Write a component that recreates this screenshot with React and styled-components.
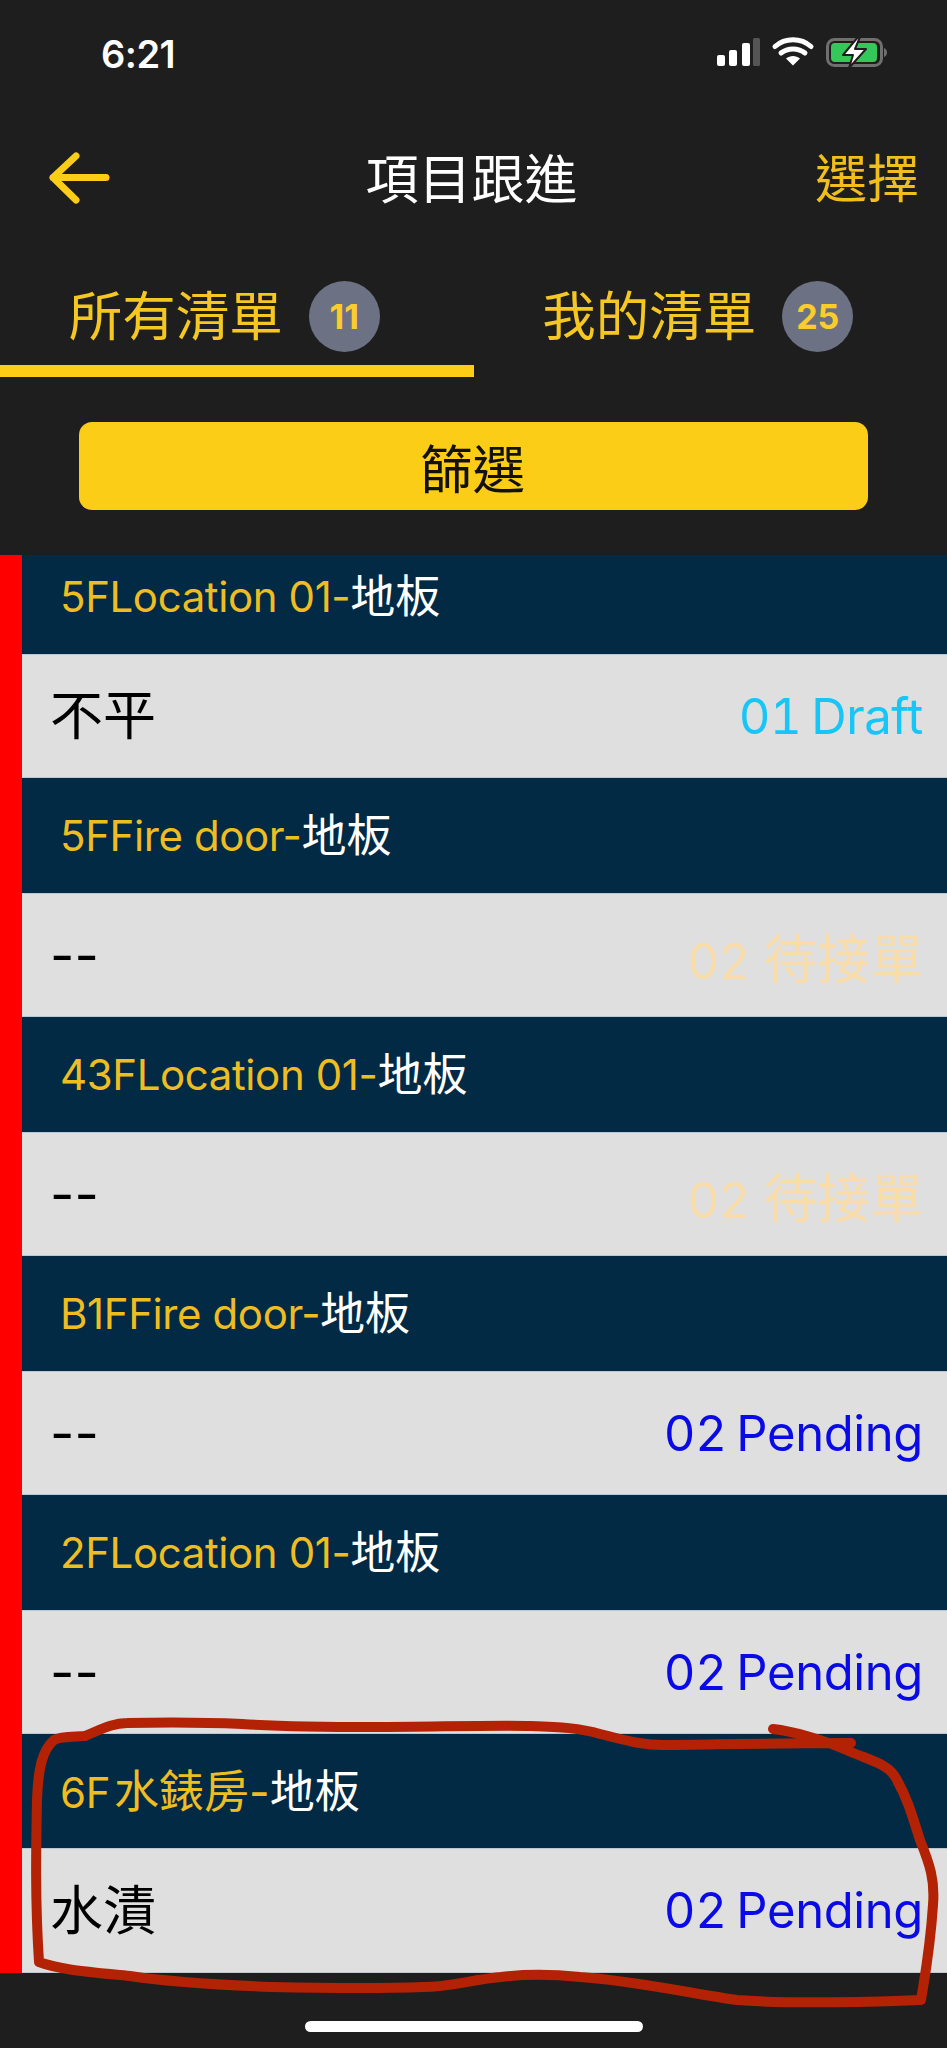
import React from "react";
import styled, { createGlobalStyle } from "styled-components";

const FONT = `Inter, "Noto Sans CJK TC", sans-serif`;

const GlobalStyle = createGlobalStyle`
  html, body {
    margin: 0;
    padding: 0;
    background: #1e1e1e;
  }
  * {
    box-sizing: border-box;
  }
`;

const Screen = styled.div`
  position: relative;
  width: 947px;
  height: 2048px;
  overflow: hidden;
  display: flex;
  flex-direction: column;
  background: #1e1e1e;
  font-family: ${FONT};
`;

const StatusBar = styled.div`
  height: 108px;
  padding: 36px 60px 0 101px;
  display: flex;
  justify-content: space-between;
  align-items: flex-start;
`;

const Time = styled.div`
  color: #fff;
  font-size: 38px;
  font-weight: 600;
  line-height: 36px;
  letter-spacing: -0.5px;
`;

const NavBar = styled.div`
  height: 140px;
  padding: 0 28px 0 48px;
  display: flex;
  align-items: center;
  justify-content: space-between;
  position: relative;
`;

const NavTitle = styled.div`
  color: #fff;
  font-size: 53px;
  line-height: 60px;
  flex: 1;
  text-align: center;
  padding: 4px 0 0 16px;
`;

const NavAction = styled.div`
  color: #f0bf1c;
  font-size: 52px;
  line-height: 60px;
  padding-top: 4px;
`;

const Tabs = styled.div`
  display: flex;
  height: 129px;
`;

const Tab = styled.div`
  width: 473.5px;
  height: 129px;
  padding: 33px 25px 0 0;
  display: flex;
  justify-content: center;
  align-items: flex-start;
  gap: 26px;
  border-bottom: 12px solid ${(props) => (props.$active ? "#fccd17" : "transparent")};
`;

const TabLabel = styled.span`
  color: #f5c722;
  font-size: 53.5px;
  line-height: 71px;
`;

const Badge = styled.span`
  width: 71px;
  height: 71px;
  border-radius: 50%;
  background: #6c7284;
  color: #fccd2a;
  font-size: 34px;
  font-weight: 700;
  display: flex;
  align-items: center;
  justify-content: center;
`;

const FilterWrap = styled.div`
  height: 178px;
  padding: 45px 79px 0;
`;

const FilterButton = styled.div`
  height: 88px;
  padding-right: 2px;
  border-radius: 13px;
  background: #fccd17;
  color: #111;
  font-size: 52.5px;
  display: flex;
  align-items: center;
  justify-content: center;
`;

const List = styled.div`
  border-left: 22px solid #ff0000;
  display: flex;
  flex-direction: column;
`;

const GroupHeader = styled.div`
  height: ${(props) => props.$height}px;
  padding: ${(props) => (props.$clipped ? "0 0 16px 38px" : "24px 0 0 38px")};
  background: #022a44;
  display: flex;
  align-items: ${(props) => (props.$clipped ? "center" : "flex-start")};
  font-size: 42px;
`;

const Location = styled.span`
  color: #eebd22;
  line-height: 68px;
  letter-spacing: -0.4px;
`;

const Room = styled.span`
  font-size: 45px;
  margin-left: 4px;
  letter-spacing: 0;
`;

const Part = styled.span`
  color: #fff;
  font-size: 45px;
  line-height: 68px;
`;

const Row = styled.div`
  height: ${(props) => props.$height}px;
  padding: 0 24px 0 28px;
  background: #dfdfdf;
  border-top: 1px solid #b9c8d2;
  border-bottom: 1px solid #b9c8d2;
  display: flex;
  align-items: center;
  justify-content: space-between;
`;

const Issue = styled.span`
  color: #000;
  font-size: 53px;
  line-height: 64px;
`;

const Status = styled.span`
  color: ${(props) => props.$color};
  font-size: 49px;
  letter-spacing: -0.4px;
  word-spacing: -3px;
  font-variant-numeric: tabular-nums;
`;

const StatusCjk = styled.span`
  font-size: 53.5px;
  margin-left: 4px;
`;

const HomeBar = styled.div`
  flex: 1;
  display: flex;
  align-items: flex-start;
  justify-content: center;
  padding-top: 48px;
`;

const HomeIndicator = styled.div`
  width: 338px;
  height: 11px;
  border-radius: 6px;
  background: #fff;
`;

const Scribble = styled.svg`
  position: absolute;
  left: 0;
  top: 0;
  pointer-events: none;
`;

const ITEMS = [
  { location: "5FLocation 01-", issue: "不平", status: "01 Draft", color: "#17c5f7", head: 99, clipped: true, row: 124 },
  { location: "5FFire door-", issue: "--", status: "02 ", cjk: "待接單", color: "#f8dcaa", head: 115, row: 124 },
  { location: "43FLocation 01-", issue: "--", status: "02 ", cjk: "待接單", color: "#f8dcaa", head: 115, row: 124 },
  { location: "B1FFire door-", issue: "--", status: "02 Pending", color: "#0a0ae6", head: 115, row: 124 },
  { location: "2FLocation 01-", issue: "--", status: "02 Pending", color: "#0a0ae6", head: 115, row: 124 },
  { location: "6F", room: "水錶房", issue: "水漬", status: "02 Pending", color: "#0a0ae6", head: 114, row: 125 },
];

function StatusIcons() {
  return (
    <svg width="172" height="32" viewBox="715 38 172 32">
      <rect x="717" y="57" width="8" height="11" rx="2" fill="#fff" />
      <rect x="729" y="52" width="8" height="16" rx="2" fill="#fff" />
      <rect x="742" y="45" width="8" height="23" rx="2" fill="#fff" />
      <rect x="753" y="40" width="7" height="28" rx="1.5" fill="#555" />
      <path
        d="M775 48.500c10-9 26-9 36 0M781 55c6.500-5.500 17.500-5.500 24 0"
        fill="none"
        stroke="#fff"
        strokeWidth="5"
        strokeLinecap="round"
      />
      <path d="M786 60.500c4-3.500 10-3.500 14 0l-7 7z" fill="#fff" />
      <rect x="827.500" y="41.500" width="54" height="26" rx="7" fill="none" stroke="#6f6f6f" strokeWidth="3" />
      <rect x="831" y="45" width="46" height="19" rx="4" fill="#34c759" />
      <path d="M884 50c2 .5 3 2.500 3 4.500s-1 4-3 4.500z" fill="#6f6f6f" />
      <path
        d="M858 39l-15 18h10l-4 13 17-19h-11l5-12z"
        fill="#fff"
        stroke="#1e1e1e"
        strokeWidth="2"
        strokeLinejoin="round"
      />
    </svg>
  );
}

function BackArrow() {
  return (
    <svg width="64" height="54" viewBox="48 152 64 54">
      <path
        d="M76 157L53 178.500L76 201M53 178.500H106"
        fill="none"
        stroke="#fccd17"
        strokeWidth="7"
        strokeLinecap="round"
        strokeLinejoin="round"
      />
    </svg>
  );
}

export default function App() {
  return (
    <>
      <GlobalStyle />
      <Screen>
        <StatusBar>
          <Time>6:21</Time>
          <StatusIcons />
        </StatusBar>
        <NavBar>
          <BackArrow />
          <NavTitle>項目跟進</NavTitle>
          <NavAction>選擇</NavAction>
        </NavBar>
        <Tabs>
          <Tab $active>
            <TabLabel>所有清單</TabLabel>
            <Badge>11</Badge>
          </Tab>
          <Tab>
            <TabLabel>我的清單</TabLabel>
            <Badge>25</Badge>
          </Tab>
        </Tabs>
        <FilterWrap>
          <FilterButton>篩選</FilterButton>
        </FilterWrap>
        <List>
          {ITEMS.map((item) => (
            <React.Fragment key={item.location}>
              <GroupHeader $height={item.head} $clipped={item.clipped}>
                <Location>
                  {item.location}
                  {item.room && <Room>{item.room}-</Room>}
                </Location>
                <Part>地板</Part>
              </GroupHeader>
              <Row $height={item.row}>
                <Issue>{item.issue}</Issue>
                <Status $color={item.color}>
                  {item.status}
                  {item.cjk && <StatusCjk>{item.cjk}</StatusCjk>}
                </Status>
              </Row>
            </React.Fragment>
          ))}
        </List>
        <HomeBar>
          <HomeIndicator />
        </HomeBar>
        <Scribble width="947" height="2048" viewBox="0 0 947 2048">
          <path
            d="M773 1729C790 1731 820 1738 851 1752C875 1762 890 1765 897 1780C908 1800 912 1815 920 1840C930 1865 935 1880 933 1905C930 1950 925 1975 921 2000C880 2002 790 2004 737 2000C700 1995 630 1980 580 1977C550 1974 525 1974 501 1977C470 1980 450 1987 423 1987C370 1989 320 1988 272 1987C220 1985 170 1982 130 1976C90 1972 60 1970 39 1962C35 1900 36 1850 37 1800C38 1770 42 1750 54 1740C62 1736 75 1737 85 1736C100 1730 112 1723 127 1723C170 1722 200 1722 242 1724C290 1727 330 1727 374 1727C430 1727 490 1725 531 1726C560 1727 580 1728 600 1734C625 1740 640 1745 664 1745C700 1745 760 1743 851 1743"
            fill="none"
            stroke="#b32205"
            strokeWidth="10"
            strokeLinecap="round"
            strokeLinejoin="round"
          />
        </Scribble>
      </Screen>
    </>
  );
}
